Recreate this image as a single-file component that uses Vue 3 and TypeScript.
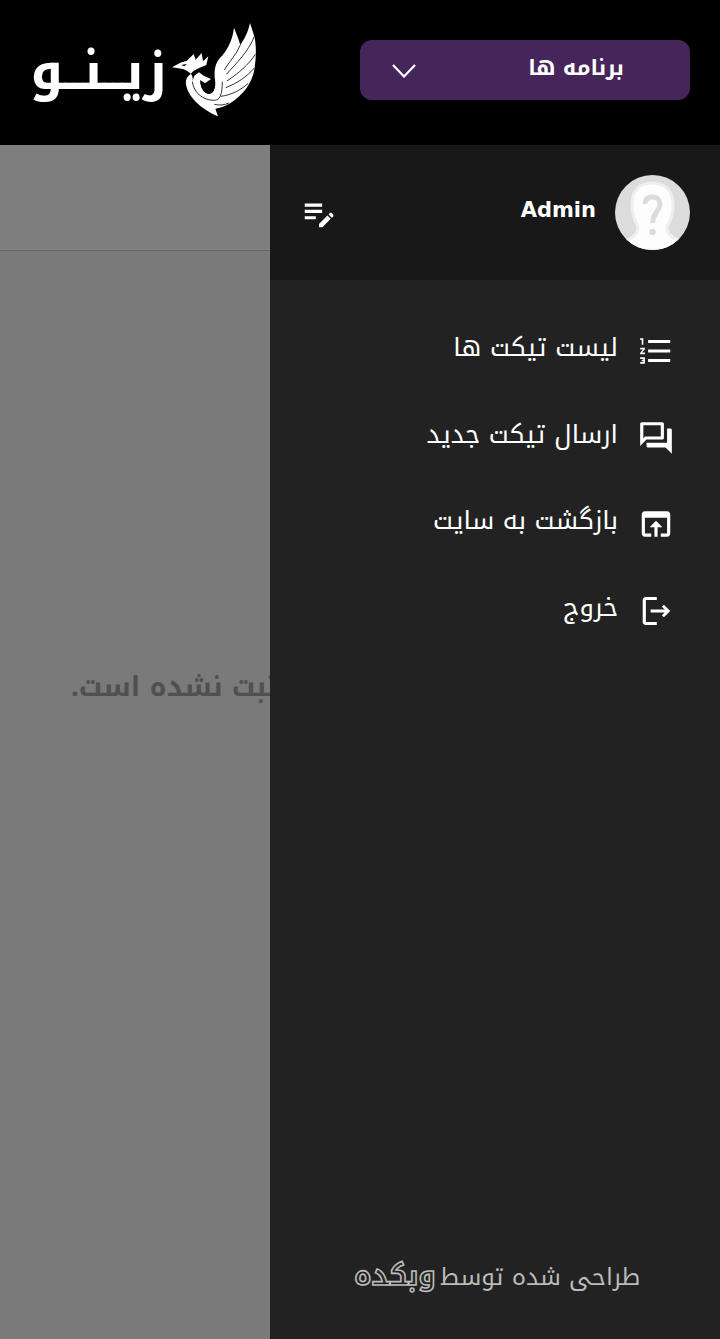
<script setup lang="ts">
const menuItems = [
  { label: 'لیست تیکت ها', icon: 'M2 17h2v.5H3v1h1v.5H2v1h3v-4H2v1zm1-9h1V4H2v1h1v3zm-1 3h1.8L2 13.1v.9h3v-1H3.2L5 10.9V10H2v1zm5-6v2h14V5H7zm0 14h14v-2H7v2zm0-6h14v-2H7v2z' },
  { label: 'ارسال تیکت جدید', icon: 'M15 4v7H5.17L4 12.17V4h11m1-2H3c-.55 0-1 .45-1 1v14l4-4h10c.55 0 1-.45 1-1V3c0-.55-.45-1-1-1zm5 4h-2v9H6v2c0 .55.45 1 1 1h11l4 4V7c0-.55-.45-1-1-1z' },
  { label: 'بازگشت به سایت', icon: 'M19 4H5c-1.11 0-2 .9-2 2v12c0 1.1.89 2 2 2h4v-2H5V8h14v10h-4v2h4c1.1 0 2-.9 2-2V6c0-1.1-.89-2-2-2zm-7 6l-4 4h3v6h2v-6h3l-4-4z' },
  { label: 'خروج', icon: 'M5.5 3.2h7v1.9H5.6v13.8h6.9v1.9h-7c-1 0-1.9-.9-1.9-1.9V5.1c0-1 .9-1.9 1.9-1.9zM17 8l-1.3 1.3 1.8 1.8H8.6v1.8h8.9l-1.8 1.8L17 16l4-4z' },
]
</script>

<template>
  <div class="page" dir="rtl">
    <header class="topbar">
      <button type="button" class="apps-btn">
        <span>برنامه ها</span>
        <svg class="chevron" viewBox="0 0 24 14" width="24" height="14">
          <path d="M1 1 12 12.5 23 1" fill="none" stroke="#fff" stroke-width="2.2" />
        </svg>
      </button>
      <div class="logo">
        <svg class="bird" viewBox="0 0 315 330" width="105" height="110">
          <path
            fill="#fff"
            d="M33 157 58 143 78 137 98 117 104 134 122 114 126 139 142 124 136 150 116 158 98 167 88 178 C76 186 72 198 76 212 C82 245 120 282 171 304 L163 281 C190 278 222 258 242 236 C262 216 276 190 281 158 C286 125 286 90 280 64 L267 24 C260 55 250 72 238 90 C232 70 226 55 219 38 C214 80 196 110 176 130 C162 146 158 170 162 195 C165 215 160 232 148 236 C130 238 118 222 118 196 L132 205 150 192 128 182 114 172 100 182 94 200 C100 178 84 170 66 162 Z"
          />
          <path
            fill="none"
            stroke="#333"
            stroke-width="3"
            d="M238 90C226 120 204 140 190 165M280 64C262 110 226 145 196 178M283 118C262 150 232 175 198 198M281 158C258 185 228 205 194 218M262 205C238 226 210 240 180 244M94 200C98 232 124 256 160 256C176 256 184 240 184 200M204 264C190 270 176 272 160 268"
          />
          <path fill="#000" d="M60 150 78 147 70 154Z" />
          <path fill="#000" d="M118 196C118 222 130 238 148 236C138 226 132 212 132 205Z" />
        </svg>
        <span class="logo-text">زیــنــو</span>
      </div>
    </header>

    <main class="content">
      <div class="content-head"></div>
      <p class="empty">تا کنون هیچ تیکتی برای شما ثبت نشده است.</p>
    </main>

    <div class="backdrop"></div>

    <aside class="drawer">
      <div class="profile">
        <svg class="avatar" viewBox="0 0 75 75" width="75" height="75">
          <defs>
            <clipPath id="avatar-clip"><circle cx="37.5" cy="37.5" r="37.5" /></clipPath>
          </defs>
          <g clip-path="url(#avatar-clip)">
            <rect width="75" height="75" fill="#dcdcdc" />
            <path
              fill="#fdfdfd"
              stroke="#efefef"
              stroke-width="3"
              d="M37 8C23 8 17 17 17 29C17 39 20 47 23 52C23 59 18 63 8 67L8 75H67V67C57 63 52 59 52 52C55 47 58 39 58 29C58 17 51 8 37 8Z"
            />
            <path
              fill="none"
              stroke="#dcdcdc"
              stroke-width="5"
              d="M30 29C30 24 33 22 37.5 22C42 22 45 25 45 29C45 36 38 37 37.5 48"
            />
            <circle cx="37.5" cy="57" r="3.2" fill="#dcdcdc" />
          </g>
        </svg>
        <span class="name">Admin</span>
        <svg class="edit-icon" viewBox="0 0 24 24" width="38" height="38">
          <path
            fill="#fff"
            d="M3 10h11v2H3v-2zm0-2h11V6H3v2zm0 8h7v-2H3v2zm15.01-3.13.7-.7c.39-.39 1.02-.39 1.41 0l.71.71c.39.39.39 1.02 0 1.41l-.7.7-2.12-2.12zm-.71.71-5.3 5.3V21h2.12l5.3-5.3-2.12-2.12z"
          />
        </svg>
      </div>

      <nav class="menu">
        <a v-for="item in menuItems" :key="item.label" class="menu-item">
          <svg viewBox="0 0 24 24" width="38" height="38"><path fill="#fff" :d="item.icon" /></svg>
          <span>{{ item.label }}</span>
        </a>
      </nav>

      <footer class="credit">
        <span>طراحی شده توسط</span>
        <span class="brand">وبکده</span>
      </footer>
    </aside>
  </div>
</template>

<style>
html,
body {
  margin: 0;
  background: #f4f4f4;
}
</style>

<style scoped>
.page {
  position: relative;
  width: 720px;
  height: 1339px;
  overflow: hidden;
  display: flex;
  flex-direction: column;
  font-family: 'Noto Kufi Arabic', 'DejaVu Sans', sans-serif;
  background: #f4f4f4;
}

.topbar {
  height: 145px;
  flex: none;
  display: flex;
  align-items: center;
  justify-content: space-between;
  padding: 0 30px 5px;
  box-sizing: border-box;
  background: #000;
}

.apps-btn {
  width: 330px;
  height: 60px;
  display: flex;
  align-items: center;
  justify-content: space-between;
  padding: 0 66px 5px 32px;
  border: none;
  border-radius: 12px;
  background: #46265a;
  color: #fff;
  font: bold 21.6px/34px 'Noto Kufi Arabic', 'DejaVu Sans', sans-serif;
  box-sizing: border-box;
}

.chevron {
  flex: none;
  margin-top: 6px;
}

.logo {
  display: flex;
  align-items: center;
}

.bird {
  display: block;
  margin-left: -6px;
}

.logo-text {
  color: #fff;
  font-weight: bold;
  font-size: 53px;
  line-height: 60px;
  margin-top: 4px;
}

.content {
  flex: 1;
  display: flex;
  flex-direction: column;
}

.content-head {
  height: 106px;
  box-sizing: border-box;
  background: #fff;
  border-bottom: 1px solid #ccc;
}

.empty {
  margin: 413px 0 0;
  padding-left: 17px;
  text-align: center;
  color: #a0a0a0;
  font-weight: bold;
  font-size: 27.2px;
  line-height: 46px;
}

.backdrop {
  position: absolute;
  inset: 145px 0 0;
  background: rgba(0, 0, 0, 0.5);
}

.drawer {
  position: absolute;
  top: 145px;
  right: 0;
  bottom: 0;
  width: 450px;
  display: flex;
  flex-direction: column;
  background: #222;
  color: #fff;
}

.profile {
  height: 135px;
  flex: none;
  display: flex;
  align-items: center;
  padding: 0 30px;
  box-sizing: border-box;
  background: #181818;
}

.avatar {
  display: block;
  flex: none;
}

.name {
  margin-right: 19px;
  margin-bottom: 5px;
  font-family: 'DejaVu Sans', sans-serif;
  font-weight: bold;
  font-size: 21px;
}

.edit-icon {
  margin-right: auto;
  margin-left: 0;
}

.menu {
  flex: 1;
  display: flex;
  flex-direction: column;
  padding-top: 25px;
}

.menu-item {
  height: 86.5px;
  display: flex;
  align-items: center;
  gap: 19px;
  padding-right: 45px;
  font-size: 25.6px;
  line-height: 40px;
  color: #fff;
}

.menu-item svg {
  flex: none;
  margin-top: 6px;
}

.credit {
  height: 77px;
  flex: none;
  display: flex;
  align-items: flex-start;
  justify-content: center;
  gap: 4px;
  padding-left: 4px;
  color: #bbb;
  font-size: 24px;
  line-height: 30px;
}

.brand {
  color: transparent;
  -webkit-text-stroke: 1.6px #bbb;
  font-weight: bold;
  font-size: 28px;
  line-height: 28px;
}
</style>
